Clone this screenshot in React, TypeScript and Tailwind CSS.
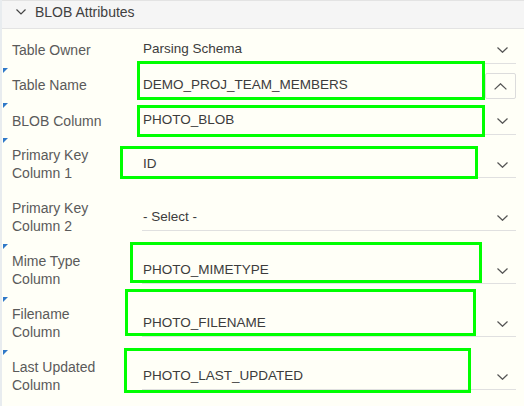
import React from 'react';

type Row = {
    label: string[];
    value: string;
    height: string;
    pad: string;
    marker?: string;
    kind?: 'select' | 'popup';
};

const rows: Row[] = [
    { label: ['Table Owner'], value: 'Parsing Schema', height: 'h-[35px]', pad: 'pt-[7px]' },
    { label: ['Table Name'], value: 'DEMO_PROJ_TEAM_MEMBERS', height: 'h-[36px]', pad: 'pt-[7px]', marker: 'top-[4px]', kind: 'popup' },
    { label: ['BLOB Column'], value: 'PHOTO_BLOB', height: 'h-[35px]', pad: 'pt-[7px]', marker: 'top-[3px]' },
    { label: ['Primary Key', 'Column 1'], value: 'ID', height: 'h-[43px]', pad: 'pt-[16px]', marker: 'top-[3px]' },
    { label: ['Primary Key', 'Column 2'], value: '- Select -', height: 'h-[53px]', pad: 'pt-[26px]' },
    { label: ['Mime Type', 'Column'], value: 'PHOTO_MIMETYPE', height: 'h-[53px]', pad: 'pt-[26px]', marker: 'top-[13px]' },
    { label: ['Filename', 'Column'], value: 'PHOTO_FILENAME', height: 'h-[53px]', pad: 'pt-[26px]', marker: 'top-[13px]' },
    { label: ['Last Updated', 'Column'], value: 'PHOTO_LAST_UPDATED', height: 'h-[53px]', pad: 'pt-[26px]', marker: 'top-[13px]' },
];

// green highlight boxes drawn over the form
const highlights = [
    'left-[137px] top-[61px] w-[348px] h-[39px]',
    'left-[137px] top-[105px] w-[348px] h-[32px]',
    'left-[120px] top-[146px] w-[358px] h-[33px]',
    'left-[130px] top-[242px] w-[352px] h-[41px]',
    'left-[125px] top-[289px] w-[351px] h-[47px]',
    'left-[124px] top-[348px] w-[347px] h-[45px]',
];

const ChevronDown = ({ className = '' }: { className?: string }) => (
    <svg width="11" height="6" viewBox="0 0 11 6" className={className}>
        <polyline points="0.5,0.5 5.5,5.3 10.5,0.5" fill="none" stroke="#555" strokeWidth="1.2" />
    </svg>
);

const ChevronUp = () => (
    <svg width="13" height="7" viewBox="0 0 13 7">
        <polyline points="0.6,6.4 6.5,0.8 12.4,6.4" fill="none" stroke="#555" strokeWidth="1.3" />
    </svg>
);

export default function App() {
    return (
        <div
            className="relative w-[524px] h-[406px] overflow-hidden flex bg-[#fffff7]"
            style={{ fontFamily: '"Liberation Sans", Arial, sans-serif' }}
        >
            <div className="w-[2px] shrink-0 bg-[#e8ecef]" />
            <div className="flex-1 flex flex-col">
                <div className="h-[29px] shrink-0 bg-[#f5f5f5] border-t border-b border-[#e3e3e3] pl-[14px] pt-[2px]">
                    <div className="h-[18px] flex items-center gap-[9px]">
                        <svg width="10" height="6" viewBox="0 0 10 6">
                            <polyline points="0.5,0.5 5,5 9.5,0.5" fill="none" stroke="#444" strokeWidth="1.2" />
                        </svg>
                        <span className="text-[14px] leading-[18px] text-[#404040]">BLOB Attributes</span>
                    </div>
                </div>

                {rows.map((row) => (
                    <div key={row.value} className={`relative flex shrink-0 pl-[10px] pr-[8px] ${row.height}`}>
                        {row.marker && (
                            <div
                                className={`absolute left-[1px] w-0 h-0 border-t-[5px] border-t-[#2f78c8] border-r-[5px] border-r-transparent ${row.marker}`}
                            />
                        )}
                        <div className={`w-[130px] shrink-0 flex flex-col justify-center pb-[1px] text-[14px] leading-[18px] text-[#5a5a5a] ${row.pad}`}>
                            {row.label.map((line) => (
                                <span key={line}>{line}</span>
                            ))}
                        </div>
                        {row.kind === 'popup' ? (
                            <div className="flex-1 flex">
                                <div className={`flex-1 flex items-center border-b border-[#e0e0e0] pl-[1px] text-[13.5px] text-[#3c3c3c] ${row.pad}`}>
                                    {row.value}
                                </div>
                                <div className="self-end mb-[1px] ml-[3px] w-[31px] h-[26px] border border-[#dcdcdc] rounded-[2px] flex items-center justify-center">
                                    <ChevronUp />
                                </div>
                            </div>
                        ) : (
                            <div className={`flex-1 flex items-center justify-between border-b border-[#e0e0e0] pl-[1px] pr-[8px] text-[13.5px] text-[#3c3c3c] ${row.pad}`}>
                                <span>{row.value}</span>
                                <ChevronDown className="mt-[1px]" />
                            </div>
                        )}
                    </div>
                ))}
            </div>

            {highlights.map((pos) => (
                <div key={pos} className={`absolute border-[3px] border-[#00ff00] ${pos}`} />
            ))}
        </div>
    );
}
